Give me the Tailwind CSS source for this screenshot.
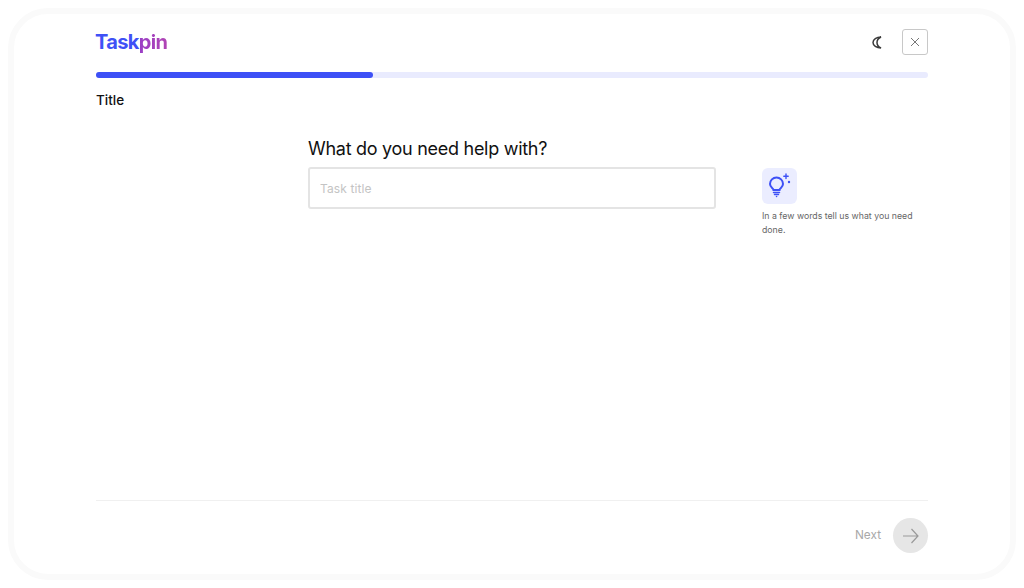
<!DOCTYPE html>
<html lang="en">
<head>
    <meta charset="UTF-8">
    <meta name="viewport" content="width=device-width, initial-scale=1.0">
    <title>Taskpin - Title</title>
    <script src="https://cdn.jsdelivr.net/npm/@tailwindcss/browser@4"></script>
</head>
<body class="bg-white font-['Inter',sans-serif] overflow-hidden">
    <div class="h-[588px] w-[1024px] p-[8px]">
        <div class="flex h-[572px] flex-col rounded-[40px] border-[6px] border-[#fafafa] bg-white px-[82px]">
            <!-- Header -->
            <header class="mt-[7px] flex h-[47px] shrink-0 items-start justify-between pt-[8px]">
                <div class="-ml-[1px] mt-[1px] text-[20px] leading-[24px] font-bold tracking-[-0.65px]">
                    <span class="text-[#3f51f6]">Task</span><span class="bg-gradient-to-r from-[#9a3fc6] to-[#b044b4] bg-clip-text text-transparent">pin</span>
                </div>
                <div class="flex items-center gap-[19px]">
                    <svg class="h-[13px] w-[11px]" viewBox="0 0 11 13" fill="none" stroke="#3a3a3a" stroke-width="1.500"><path d="M9 1C4.500 1 1 3.400 1 6.500S4.500 12 9 12C6.300 10.800 5 8.900 5 6.500S6.300 2.200 9 1Z"/></svg>
                    <button class="flex h-[26px] w-[26px] items-center justify-center rounded-[3px] border border-[#c8c8c8] bg-white">
                        <svg class="h-[10px] w-[10px]" viewBox="0 0 10 10" fill="none" stroke="#777" stroke-width="1"><path d="M1 1l8 8M9 1l-8 8"/></svg>
                    </button>
                </div>
            </header>

            <!-- Progress -->
            <div class="mt-[4px] h-[6px] w-full shrink-0 rounded-full bg-[#e9ebfe]">
                <div class="h-full w-[277px] rounded-full bg-[#3d50f6]"></div>
            </div>
            <div class="mt-[12px] text-[13.500px] leading-[20px] font-medium text-[#111]">Title</div>

            <!-- Question -->
            <main class="mt-[26px] flex flex-1 items-start pl-[212px]">
                <div class="w-[408px]">
                    <h1 class="text-[18px] leading-[26px] font-normal tracking-[-0.28px] text-[#111]">What do you need help with?</h1>
                    <input type="text" placeholder="Task title" class="mt-[5px] h-[42px] w-full rounded-[3px] border-2 border-[#e4e4e4] bg-white px-[10px] text-[12px] tracking-[0.1px] placeholder:text-[#c4c4c4] outline-none">
                </div>
                <aside class="mt-[32px] ml-[46px] w-[166px]">
                    <div class="h-[36px] w-[35px] rounded-[6px] bg-[#ebedff]">
                        <svg class="h-[36px] w-[35px]" viewBox="0 0 35 36" fill="none" stroke="#3d50f6" stroke-width="2" stroke-linecap="round">
                            <path d="M11.500 22c0-2-3.500-2.500-3.500-6a6.500 6.500 0 0 1 13 0c0 3.500-3.500 4-3.500 6Z"/>
                            <path d="M11.500 24.500h6M12.500 26.500h4" stroke-width="1.500"/>
                            <path d="M14.500 28.500h0.100" stroke-width="1.500"/>
                            <path d="M24 6v4.500M21.800 8.250h4.400" stroke-width="1.400"/>
                            <circle cx="27" cy="14" r="1.200" fill="#3d50f6" stroke="none"/>
                        </svg>
                    </div>
                    <p class="mt-[5px] text-[8.750px] leading-[14px] text-[#666]">In a few words tell us what you need done.</p>
                </aside>
            </main>

            <!-- Footer -->
            <footer class="mb-[21px] flex shrink-0 items-center justify-end gap-[12px] border-t border-[#f0f0f0] pt-[17px]">
                <span class="text-[11.800px] text-[#a8a8a8]">Next</span>
                <button class="flex h-[35px] w-[35px] items-center justify-center rounded-full bg-[#e6e6e6]">
                    <svg class="h-[16px] w-[16px]" viewBox="0 0 16 16" fill="none" stroke="#999" stroke-width="1.200"><path d="M0 8h15M8.500 1l6.500 7-6.500 7"/></svg>
                </button>
            </footer>
        </div>
    </div>
</body>
</html>
